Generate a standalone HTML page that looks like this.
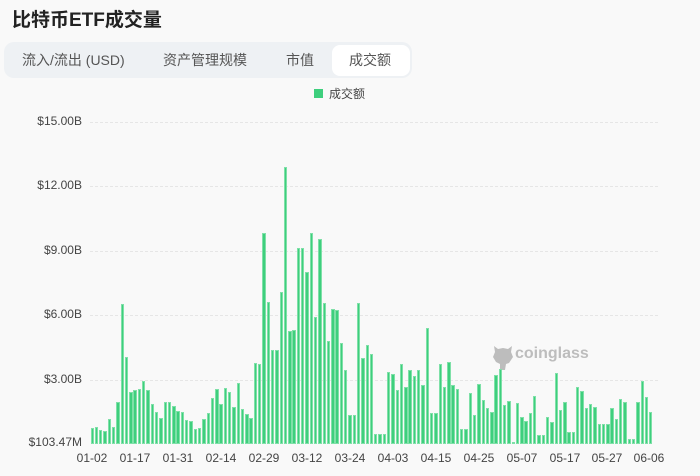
<!DOCTYPE html>
<html><head><meta charset="utf-8"><style>
*{margin:0;padding:0;box-sizing:border-box}
body{width:700px;height:476px;background:#f9f9f9;font-family:"Liberation Sans","Noto Sans CJK SC",sans-serif;position:relative;overflow:hidden;color:#333}
.t{position:absolute;left:12px;top:5px;font-size:19px;font-weight:bold;color:#222}
.tabs{position:absolute;left:4px;top:42px;width:408px;height:36px;background:#eef1f4;border-radius:10px}
.tab{position:absolute;top:0;height:36px;line-height:36px;font-size:14px;color:#555}
.act{position:absolute;left:328px;top:3px;width:78px;height:31px;background:#fff;border-radius:8px}
.leg{position:absolute;left:314px;top:89px;width:9px;height:9px;background:#3ecf7d}
.legt{position:absolute;left:329px;top:85px;font-size:12px;color:#444}
.yl{position:absolute;right:618px;font-size:12px;color:#444;white-space:nowrap}
.g{position:absolute;left:90px;width:568px;border-top:1px dashed #e6e6e6}
.xl{position:absolute;top:451px;font-size:12px;color:#444;transform:translateX(-50%)}
.bars{position:absolute;left:90.5px;top:100px;height:344px;display:flex;align-items:flex-end}
.bars i{display:block;width:3.4px;margin-right:0.92px;background:#3ecf7d;border:0.5px solid #7fe0a8}
.wm{position:absolute;left:515px;top:345px;font-size:16px;font-weight:bold;color:#bdbdbd}
</style></head><body>
<div class="t">比特币ETF成交量</div>
<div class="tabs"><div class="act"></div>
<div class="tab" style="left:18px">流入/流出 (USD)</div>
<div class="tab" style="left:159px">资产管理规模</div>
<div class="tab" style="left:282px">市值</div>
<div class="tab" style="left:345px">成交额</div></div>
<div class="leg"></div><div class="legt">成交额</div>
<div class="g" style="top:122px"></div><div class="g" style="top:186px"></div><div class="g" style="top:251px"></div><div class="g" style="top:315px"></div><div class="g" style="top:380px"></div>
<div class="yl" style="top:114px">$15.00B</div>
<div class="yl" style="top:178px">$12.00B</div>
<div class="yl" style="top:243px">$9.00B</div>
<div class="yl" style="top:307px">$6.00B</div>
<div class="yl" style="top:372px">$3.00B</div>
<div class="yl" style="top:435px">$103.47M</div>
<svg style="position:absolute;left:491px;top:343px" width="24" height="28" viewBox="0 0 24 28"><path d="M3 3 L7 6 L12 5 L17 6 L21 3 L20 9 L22 14 L18 20 L15 21 L14 27 L9 27 L9 21 L5 19 L2 14 L4 9Z" fill="#bdbdbd"/></svg>
<div class="wm">coinglass</div>
<div class="bars">
<i style="height:15.7px"></i><i style="height:17.3px"></i><i style="height:14px"></i><i style="height:13px"></i><i style="height:25.3px"></i><i style="height:17.3px"></i><i style="height:41.7px"></i><i style="height:140px"></i><i style="height:87.3px"></i><i style="height:51.7px"></i><i style="height:54px"></i><i style="height:55.3px"></i><i style="height:63px"></i><i style="height:54.3px"></i><i style="height:40px"></i><i style="height:31.7px"></i><i style="height:25.7px"></i><i style="height:42.3px"></i><i style="height:41.7px"></i><i style="height:38.3px"></i><i style="height:32.7px"></i><i style="height:32px"></i><i style="height:24.3px"></i><i style="height:23.3px"></i><i style="height:15.3px"></i><i style="height:16px"></i><i style="height:25.3px"></i><i style="height:31.3px"></i><i style="height:45.7px"></i><i style="height:55px"></i><i style="height:40px"></i><i style="height:56px"></i><i style="height:51.7px"></i><i style="height:36.7px"></i><i style="height:60.7px"></i><i style="height:35.3px"></i><i style="height:30px"></i><i style="height:26.3px"></i><i style="height:80.7px"></i><i style="height:80px"></i><i style="height:211.3px"></i><i style="height:142px"></i><i style="height:94.3px"></i><i style="height:94.3px"></i><i style="height:152px"></i>
<i style="height:277.3px"></i><i style="height:113px"></i><i style="height:113.7px"></i><i style="height:195.7px"></i><i style="height:195.7px"></i><i style="height:171.7px"></i><i style="height:210.7px"></i><i style="height:127.3px"></i><i style="height:204.7px"></i><i style="height:141.3px"></i><i style="height:103px"></i><i style="height:134.7px"></i><i style="height:134.3px"></i><i style="height:101.3px"></i><i style="height:74px"></i><i style="height:29.3px"></i><i style="height:29.3px"></i><i style="height:140.7px"></i><i style="height:86px"></i><i style="height:98.7px"></i><i style="height:89.7px"></i><i style="height:10px"></i><i style="height:10px"></i><i style="height:10px"></i><i style="height:72.3px"></i><i style="height:69.7px"></i><i style="height:53.7px"></i><i style="height:80px"></i><i style="height:56.7px"></i><i style="height:74.3px"></i><i style="height:68px"></i><i style="height:74.3px"></i><i style="height:58.7px"></i><i style="height:115.7px"></i><i style="height:30.7px"></i><i style="height:30.7px"></i><i style="height:80.3px"></i><i style="height:56.7px"></i><i style="height:81.7px"></i><i style="height:59px"></i><i style="height:55.3px"></i><i style="height:15px"></i><i style="height:15px"></i><i style="height:51px"></i><i style="height:29.3px"></i><i style="height:60px"></i>
<i style="height:44.3px"></i><i style="height:36.3px"></i><i style="height:31.7px"></i><i style="height:68.7px"></i><i style="height:74.7px"></i><i style="height:39px"></i><i style="height:43.3px"></i><i style="height:1px"></i><i style="height:40.7px"></i><i style="height:27px"></i><i style="height:22.7px"></i><i style="height:30.7px"></i><i style="height:48px"></i><i style="height:9.3px"></i><i style="height:9.3px"></i><i style="height:27px"></i><i style="height:21.7px"></i><i style="height:71px"></i><i style="height:34.3px"></i><i style="height:42px"></i><i style="height:11.7px"></i><i style="height:11.7px"></i><i style="height:57px"></i><i style="height:53px"></i><i style="height:36.3px"></i><i style="height:40.3px"></i><i style="height:36.7px"></i><i style="height:20.3px"></i><i style="height:20.3px"></i><i style="height:20.3px"></i><i style="height:35.7px"></i><i style="height:25.3px"></i><i style="height:45px"></i><i style="height:42px"></i><i style="height:5.3px"></i><i style="height:5.3px"></i><i style="height:42px"></i><i style="height:63px"></i><i style="height:46.7px"></i><i style="height:32px"></i>
</div>
<div class="xl" style="left:92px">01-02</div><div class="xl" style="left:135px">01-17</div><div class="xl" style="left:178px">01-31</div><div class="xl" style="left:221px">02-14</div><div class="xl" style="left:264px">02-29</div><div class="xl" style="left:307px">03-12</div><div class="xl" style="left:350px">03-24</div><div class="xl" style="left:393px">04-03</div><div class="xl" style="left:436px">04-15</div><div class="xl" style="left:479px">04-25</div><div class="xl" style="left:522px">05-07</div><div class="xl" style="left:565px">05-17</div><div class="xl" style="left:607px">05-27</div><div class="xl" style="left:649px">06-06</div>
</body></html>
